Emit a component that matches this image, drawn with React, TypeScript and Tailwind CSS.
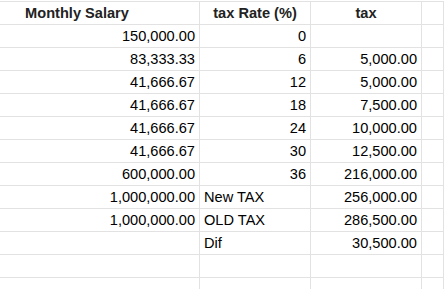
const rows: [string, string, string][] = [
  ['150,000.00', '0', ''],
  ['83,333.33', '6', '5,000.00'],
  ['41,666.67', '12', '5,000.00'],
  ['41,666.67', '18', '7,500.00'],
  ['41,666.67', '24', '10,000.00'],
  ['41,666.67', '30', '12,500.00'],
  ['600,000.00', '36', '216,000.00'],
  ['1,000,000.00', 'New TAX', '256,000.00'],
  ['1,000,000.00', 'OLD TAX', '286,500.00'],
  ['', 'Dif', '30,500.00'],
  ['', '', ''],
  ['', '', ''],
];

const isNumber = (v: string) => /^[\d,.]+$/.test(v);

function Cell({ value, bold, center }: { value: string; bold?: boolean; center?: boolean }) {
  const align = center ? 'justify-center' : isNumber(value) ? 'justify-end' : 'justify-start';
  return (
    <div
      className={`flex h-[22px] items-end overflow-hidden whitespace-nowrap border-r border-[#e2e2e2] px-[4px] pb-[2px] leading-[17px] ${align} ${
        bold ? 'font-bold text-[#222222]' : 'text-black'
      }`}
    >
      {value}
    </div>
  );
}

export default function App() {
  return (
    <div className="h-[289px] w-[444px] overflow-hidden bg-white text-[14.6px]" style={{ fontFamily: '"Liberation Sans", Arial, sans-serif' }}>
      <div className="-ml-[45px] mt-px border-t border-[#e2e2e2]">
        <div className="grid grid-cols-[245px_111px_111px_1fr] border-b border-[#e2e2e2]">
          <Cell value="Monthly Salary" bold center />
          <Cell value="tax Rate (%)" bold center />
          <Cell value="tax" bold center />
          <Cell value="" />
        </div>
        {rows.map((r, i) => (
          <div key={i} className="grid grid-cols-[245px_111px_111px_1fr] border-b border-[#e2e2e2]">
            <Cell value={r[0]} />
            <Cell value={r[1]} />
            <Cell value={r[2]} />
            <Cell value="" />
          </div>
        ))}
        <div className="grid grid-cols-[245px_111px_111px_1fr]">
          <Cell value="" />
          <Cell value="" />
          <Cell value="" />
          <Cell value="" />
        </div>
      </div>
    </div>
  );
}
